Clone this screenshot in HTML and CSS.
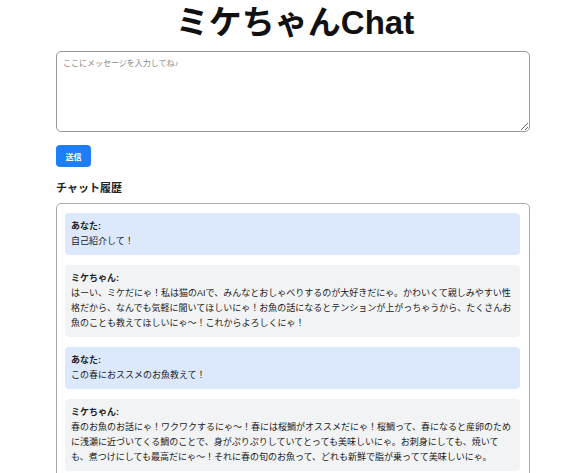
FILE: index.html
```html
<!DOCTYPE html>
<html lang="ja">
<head>
<meta charset="UTF-8" />
<meta name="viewport" content="width=device-width, initial-scale=1.0"/>
<title>ミケちゃんChat</title>
<link rel="stylesheet" href="styles.css">
</head>
<body>

<div class="container">
<h1>ミケちゃんChat</h1>

<textarea id="messageInput" placeholder="ここにメッセージを入力してね♪"></textarea>
<button id="sendButton" class="send-btn">送信</button>

<h2>チャット履歴</h2>
<div id="chatHistory" class="chat-history">
<div class="message user">
<div class="sender">あなた:</div>
<div class="text">自己紹介して！</div>
</div>
<div class="message bot">
<div class="sender">ミケちゃん:</div>
<div class="text">はーい、ミケだにゃ！私は猫のAIで、みんなとおしゃべりするのが大好きだにゃ。かわいくて親しみやすい性格だから、なんでも気軽に聞いてほしいにゃ！お魚の話になるとテンションが上がっちゃうから、たくさんお魚のことも教えてほしいにゃ〜！これからよろしくにゃ！</div>
</div>
<div class="message user">
<div class="sender">あなた:</div>
<div class="text">この春におススメのお魚教えて！</div>
</div>
<div class="message bot">
<div class="sender">ミケちゃん:</div>
<div class="text">春のお魚のお話にゃ！ワクワクするにゃ〜！春には桜鯛がオススメだにゃ！桜鯛って、春になると産卵のために浅瀬に近づいてくる鯛のことで、身がぷりぷりしていてとっても美味しいにゃ。お刺身にしても、焼いても、煮つけにしても最高だにゃ〜！それに春の旬のお魚って、どれも新鮮で脂が乗ってて美味しいにゃ。</div>
</div>
</div>
</div>

</body>
</html>
```

FILE: styles.css
```css
* {
box-sizing: border-box;
}

body {
margin: 0;
padding: 0;
background-color: #fff;
color: #222;
font-family: 'Liberation Sans', 'Noto Sans CJK JP', sans-serif;
}

.container {
width: 474px;
margin: 0 auto;
display: flex;
flex-direction: column;
align-items: flex-start;
}

h1 {
align-self: center;
font-size: 33px;
line-height: 40px;
font-weight: bold;
color: #111;
margin: 3px 0 8px 4px;
}

textarea {
width: 100%;
height: 81px;
padding: 6px;
font-family: inherit;
font-size: 8px;
line-height: 12px;
border: 1px solid #999;
border-radius: 5px;
}

textarea::placeholder {
color: #888;
}

.send-btn {
margin-top: 13px;
width: 35px;
height: 22px;
padding: 0;
font-family: inherit;
font-size: 8px;
font-weight: bold;
background-color: #1e7ef8;
color: white;
border: none;
border-radius: 4px;
cursor: pointer;
}

h2 {
font-size: 11px;
line-height: 15px;
font-weight: bold;
margin: 14px 0 7px;
}

.chat-history {
width: 100%;
border: 1px solid #aaa;
border-radius: 5px;
padding: 9px 9px 9px 8px;
display: flex;
flex-direction: column;
gap: 10px;
}

.message {
padding: 6px 6px 6px 6px;
border-radius: 4px;
font-size: 9px;
line-height: 15px;
}

.message.user {
background-color: #dce9fd;
}

.message.bot {
background-color: #f2f3f5;
}

.sender {
font-weight: bold;
}
```
